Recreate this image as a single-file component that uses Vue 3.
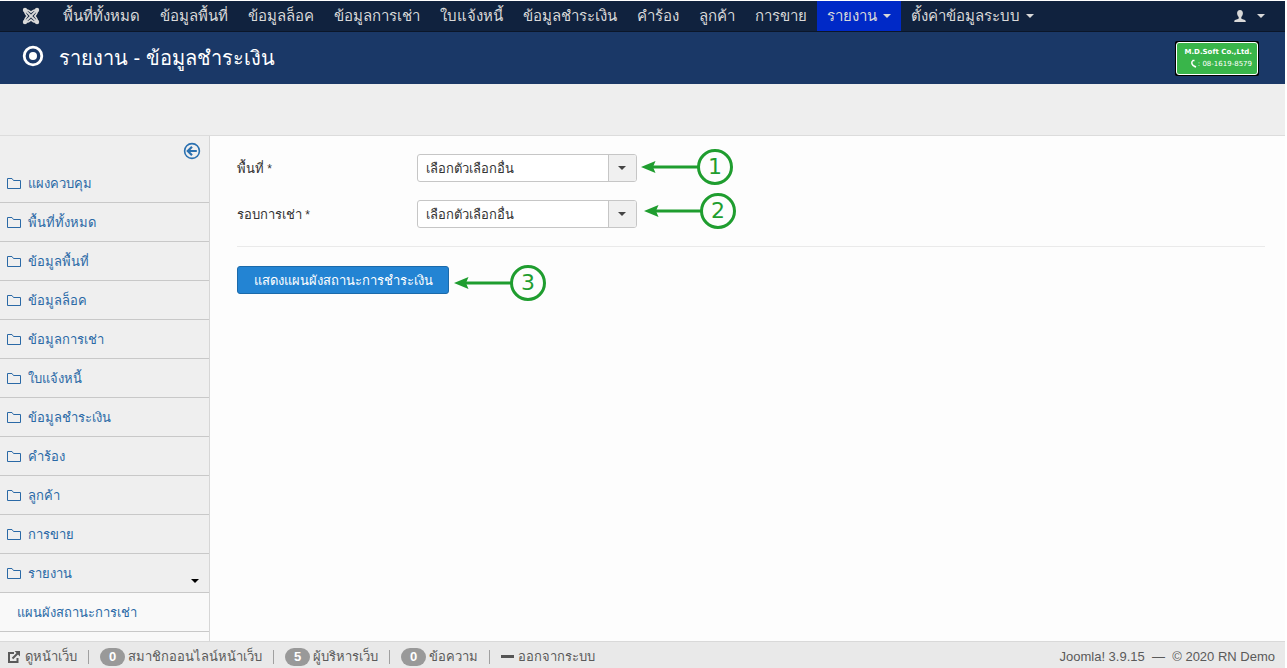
<script setup>
import { ref } from 'vue'

const navItems = [
  { label: 'พื้นที่ทั้งหมด' },
  { label: 'ข้อมูลพื้นที่' },
  { label: 'ข้อมูลล็อค' },
  { label: 'ข้อมูลการเช่า' },
  { label: 'ใบแจ้งหนี้' },
  { label: 'ข้อมูลชำระเงิน' },
  { label: 'คำร้อง' },
  { label: 'ลูกค้า' },
  { label: 'การขาย' },
  { label: 'รายงาน', menu: true, active: true },
  { label: 'ตั้งค่าข้อมูลระบบ', menu: true },
]

const sideItems = [
  'แผงควบคุม',
  'พื้นที่ทั้งหมด',
  'ข้อมูลพื้นที่',
  'ข้อมูลล็อค',
  'ข้อมูลการเช่า',
  'ใบแจ้งหนี้',
  'ข้อมูลชำระเงิน',
  'คำร้อง',
  'ลูกค้า',
  'การขาย',
  'รายงาน',
]

const fields = [
  { id: 'area', label: 'พื้นที่', step: 1 },
  { id: 'round', label: 'รอบการเช่า', step: 2 },
]

const placeholder = 'เลือกตัวเลือกอื่น'
const values = ref({ area: '', round: '' })
</script>

<template>
  <div class="page">
    <nav class="topnav">
      <a class="brand" href="#" aria-label="Joomla">
        <svg width="18" height="18" viewBox="0 0 18 18" fill="none" stroke="currentColor">
          <g stroke-width="1.800">
            <path d="M3 3l12 12M15 3L3 15" />
            <path d="M3 3.200Q5.500 2 9 5.200Q12.500 2 15 3.200Q16 5.500 12.800 9Q16 12.500 15 14.800Q12.500 16 9 12.800Q5.500 16 3 14.800Q2 12.500 5.200 9Q2 5.500 3 3.200z" />
          </g>
          <g fill="currentColor" stroke="none">
            <circle cx="3" cy="3" r="2.200" />
            <circle cx="15" cy="3" r="2.200" />
            <circle cx="3" cy="15" r="2.200" />
            <circle cx="15" cy="15" r="2.200" />
          </g>
        </svg>
      </a>
      <ul class="nav-list">
        <li v-for="item in navItems" :key="item.label">
          <a href="#" class="nav-link" :class="{ active: item.active }">
            {{ item.label }}<span v-if="item.menu" class="caret"></span>
          </a>
        </li>
      </ul>
      <a class="user" href="#" aria-label="User menu">
        <svg width="12" height="12" viewBox="0 0 12 12" fill="currentColor">
          <path d="M6 0c1.900 0 2.900 1.300 2.900 3.200 0 1.500-.6 2.900-1.600 3.700v1.500c.4.700 4 .9 4.400 2.400V12H.3v-1.200c.4-1.500 4-1.700 4.400-2.400V6.900C3.700 6.100 3.100 4.700 3.100 3.200 3.100 1.300 4.100 0 6 0z" />
        </svg>
        <span class="caret"></span>
      </a>
    </nav>

    <header class="header">
      <svg class="title-icon" width="22" height="22" viewBox="0 0 22 22">
        <circle cx="11" cy="11" r="8.800" fill="none" stroke="currentColor" stroke-width="2.800" />
        <circle cx="11" cy="11" r="4" fill="currentColor" />
      </svg>
      <h1>รายงาน - ข้อมูลชำระเงิน</h1>
      <div class="logo">
        <div class="logo-inner">
          <strong>M.D.Soft Co.,Ltd.</strong>
          <span class="phone">
            <svg width="7" height="9" viewBox="0 0 7 9" fill="none" stroke="currentColor" stroke-width="1.500">
              <path d="M3 1.500C.8 3 1.500 6.500 5.500 8M2.500 1.500h2M4 7l2 1" />
            </svg>
            : 08-1619-8579
          </span>
        </div>
      </div>
    </header>

    <div class="subhead"></div>

    <div class="body">
      <aside class="sidebar">
        <button class="collapse" type="button" aria-label="Toggle sidebar">
          <svg width="18" height="18" viewBox="0 0 18 18" fill="none" stroke="currentColor">
            <circle cx="9" cy="9" r="7.400" stroke-width="1.600" />
            <path d="M4.800 9h9M9 4.800L4.800 9 9 13.200" stroke-width="2.200" />
          </svg>
        </button>
        <ul class="side-list">
          <li v-for="(label, i) in sideItems" :key="label">
            <a href="#" class="side-link">
              <svg width="14" height="12" viewBox="0 0 14 12" fill="none" stroke="currentColor">
                <path d="M.5 10.500v-10h4.500l1.500 2h7v8z" />
              </svg>
              <span>{{ label }}</span>
              <span v-if="i === sideItems.length - 1" class="caret side-caret"></span>
            </a>
          </li>
          <li class="sub"><a href="#" class="side-link">แผนผังสถานะการเช่า</a></li>
          <li class="sub"><span class="side-link"></span></li>
        </ul>
      </aside>

      <main class="content">
        <form @submit.prevent>
          <div v-for="field in fields" :key="field.id" class="row">
            <label :for="field.id">{{ field.label }}<span class="star">&nbsp;*</span></label>
            <div class="control">
              <div class="select-box">
                <select :id="field.id" v-model="values[field.id]">
                  <option value="">{{ placeholder }}</option>
                </select>
                <span class="drop"><span class="caret"></span></span>
              </div>
              <div class="note" :class="'note-' + field.step">
                <svg width="58" height="12" viewBox="0 0 58 12">
                  <path d="M8 6h50" stroke="currentColor" stroke-width="3" />
                  <path d="M0 6L14.500 0 12 6l2.500 6z" fill="currentColor" />
                </svg>
                <span class="num">{{ field.step }}</span>
              </div>
            </div>
          </div>
          <hr />
          <div class="submit">
            <button class="primary" type="submit">แสดงแผนผังสถานะการชำระเงิน</button>
            <div class="note note-3">
              <svg width="58" height="12" viewBox="0 0 58 12">
                <path d="M8 6h50" stroke="currentColor" stroke-width="3" />
                <path d="M0 6L14.500 0 12 6l2.500 6z" fill="currentColor" />
              </svg>
              <span class="num">3</span>
            </div>
          </div>
        </form>
      </main>
    </div>

    <footer class="footer">
      <div class="status">
        <a href="#" class="stat">
          <svg class="ext" width="12" height="12" viewBox="0 0 12 12" fill="none" stroke="currentColor" stroke-width="2">
            <path d="M6 2H1v9h8.500V7M4.500 7.500L10 2" />
            <path d="M6.500 0H12v5.500z" fill="currentColor" stroke="none" />
          </svg>
          ดูหน้าเว็บ
        </a>
        <span class="stat"><b class="badge">0</b>สมาชิกออนไลน์หน้าเว็บ</span>
        <span class="stat"><b class="badge">5</b>ผู้บริหารเว็บ</span>
        <a href="#" class="stat"><b class="badge">0</b>ข้อความ</a>
        <a href="#" class="stat"><i class="dash"></i>ออกจากระบบ</a>
      </div>
      <div class="version">Joomla! 3.9.15 &nbsp;—&nbsp; © 2020 RN Demo</div>
    </footer>
  </div>
</template>

<style>
body {
  background: #fff;
}
</style>

<style scoped>
.page {
  box-sizing: border-box;
  display: flex;
  flex-direction: column;
  height: 100vh;
  padding: 1px 2px 0 0;
  overflow: hidden;
  font-family: "Liberation Sans", "Noto Sans", sans-serif;
  font-size: 13px;
  line-height: 18px;
  color: #333;
}
.page * {
  box-sizing: border-box;
}
a {
  color: inherit;
  text-decoration: none;
}
ul {
  list-style: none;
  margin: 0;
  padding: 0;
}
svg {
  display: block;
  flex: none;
}
.caret {
  display: inline-block;
  flex: none;
  border: 4px solid transparent;
  border-top-color: currentColor;
  border-bottom: 0;
}
.topnav {
  display: flex;
  flex: none;
  height: 31px;
  background: #10223e;
  border-bottom: 1px solid #0b1629;
  color: #d9d9d9;
  font-size: 15px;
}
.brand {
  display: flex;
  align-items: center;
  padding: 0 13px 0 22px;
}
.nav-list {
  display: flex;
  flex: 1;
}
.nav-link {
  display: flex;
  align-items: center;
  height: 30px;
  padding: 0 10px;
  white-space: nowrap;
}
.nav-link .caret {
  margin-left: 6px;
}
.nav-link.active {
  background: #0029c7;
}
.user {
  display: flex;
  align-items: center;
  gap: 11px;
  padding-right: 20px;
}
.header {
  display: flex;
  flex: none;
  align-items: center;
  height: 52px;
  padding: 0 26px 0 22px;
  background: #1a3867;
  color: #fff;
}
h1 {
  flex: 1;
  margin: 0 0 0 15px;
  font-size: 20px;
  font-weight: 400;
  line-height: 32px;
}
.title-icon {
  margin-bottom: 4px;
}
.logo {
  padding: 1px;
  background: #000;
  border-radius: 2px;
}
.logo-inner {
  display: flex;
  flex-direction: column;
  align-items: flex-end;
  width: 82px;
  height: 33px;
  padding: 3px 5px;
  background: #39b54a;
  border: 1px solid #fff;
  border-radius: 3px;
  font-family: "DejaVu Sans", sans-serif;
  font-size: 7px;
  line-height: 12px;
  white-space: nowrap;
}
.phone {
  display: flex;
  align-items: center;
  gap: 1px;
}
.subhead {
  flex: none;
  height: 52px;
  background: #eee;
  border-bottom: 1px solid #dcdcdc;
}
.body {
  display: flex;
  flex: 1;
  min-height: 0;
}
.sidebar {
  flex: none;
  width: 210px;
  overflow: hidden;
  background: #efefef;
  border-right: 1px solid #d6d6d6;
  color: #2a69a6;
}
.collapse {
  display: flex;
  width: 18px;
  height: 18px;
  margin: 6px 8px 4px auto;
  padding: 0;
  background: none;
  border: 0;
  color: #2a70b0;
}
.side-link {
  display: flex;
  align-items: center;
  gap: 7px;
  height: 39px;
  padding: 2px 10px 0 7px;
  border-bottom: 1px solid #c8c8c8;
}
.side-caret {
  margin: 14px 0 0 auto;
  color: #000;
}
.sub {
  background: #f9f9f9;
}
.sub .side-link {
  padding-left: 17px;
}
.content {
  flex: 1;
  min-width: 0;
  padding: 18px 20px 0 27px;
  background: #fdfdfd;
}
.row {
  display: flex;
  align-items: center;
  margin-bottom: 18px;
}
.row label {
  width: 180px;
  padding-top: 2px;
}
.star {
  font-size: 12px;
}
.control,
.submit {
  position: relative;
}
.select-box {
  display: flex;
  width: 220px;
  height: 28px;
  background: #fff;
  border: 1px solid #c6c6c6;
  border-radius: 3px;
  overflow: hidden;
}
select {
  flex: 1;
  min-width: 0;
  padding: 2px 8px 0;
  appearance: none;
  background: none;
  border: 0;
  color: #333;
  font: inherit;
}
.drop {
  display: flex;
  align-items: center;
  justify-content: center;
  width: 28px;
  padding-right: 2px;
  background: #f0f0f0;
  border-left: 1px solid #c6c6c6;
  color: #444;
}
hr {
  height: 1px;
  margin: 0 0 19px;
  background: #eaeaea;
  border: 0;
}
.submit {
  width: fit-content;
}
.primary {
  display: block;
  min-width: 212px;
  height: 28px;
  padding: 2px 12px 0;
  background: #2384d3;
  border: 1px solid #1b6aaa;
  border-radius: 3px;
  color: #fff;
  font: inherit;
}
.note {
  position: absolute;
  left: 100%;
  display: flex;
  align-items: center;
  color: #1f9d2f;
}
.note-1 {
  top: -5px;
  margin-left: 4px;
}
.note-2 {
  top: -7px;
  margin-left: 7px;
}
.note-3 {
  top: -1px;
  margin-left: 5px;
}
.num {
  width: 36px;
  height: 36px;
  margin-left: -2px;
  border: 3px solid currentColor;
  border-radius: 50%;
  font-family: "DejaVu Sans", sans-serif;
  font-size: 22px;
  line-height: 30px;
  text-align: center;
}
.footer {
  display: flex;
  flex: none;
  align-items: center;
  justify-content: space-between;
  height: 27px;
  padding: 3px 10px 0 8px;
  background: #e9e9e9;
  border-top: 1px solid #d9d9d9;
  color: #5a5a5a;
}
.status {
  display: flex;
}
.stat {
  display: flex;
  align-items: center;
  white-space: nowrap;
}
.stat + .stat::before {
  content: "";
  width: 1px;
  height: 14px;
  margin: 0 11px;
  background: #a0a0a0;
}
.ext {
  margin-right: 5px;
}
.badge {
  width: 25px;
  margin-right: 3px;
  background: #999;
  border-radius: 9px;
  color: #fff;
  text-align: center;
}
.dash {
  width: 13px;
  height: 3px;
  margin-right: 4px;
  background: #555;
}
</style>
